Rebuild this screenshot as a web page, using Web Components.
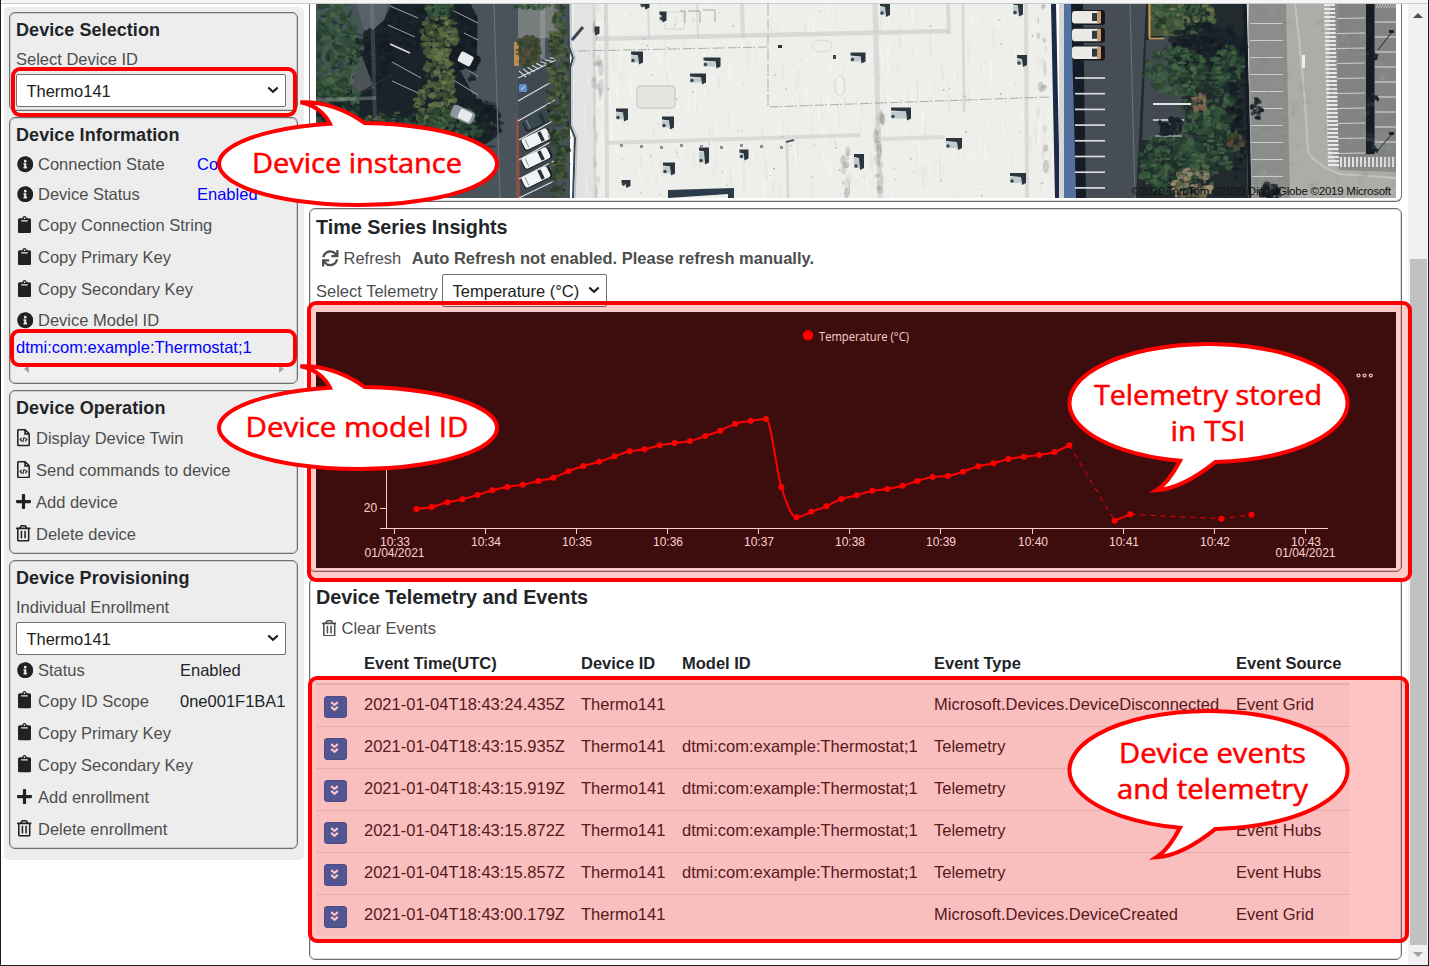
<!DOCTYPE html>
<html lang="en">
<head>
<meta charset="utf-8">
<title>Device dashboard</title>
<style>
html,body{margin:0;height:100%;overflow:hidden;background:#fff}
body{font-family:"Liberation Sans",Arial,sans-serif;font-size:16.5px;color:#212529}
</style>
</head>
<body>
<dash-app></dash-app>
<script>
const ICONS={
info:['0 0 512 512','<path d="M256 8C119.043 8 8 119.083 8 256c0 136.997 111.043 248 248 248s248-111.003 248-248C504 119.083 392.957 8 256 8zm0 110c23.196 0 42 18.804 42 42s-18.804 42-42 42-42-18.804-42-42 18.804-42 42-42zm56 254c0 6.627-5.373 12-12 12h-88c-6.627 0-12-5.373-12-12v-24c0-6.627 5.373-12 12-12h12v-64h-12c-6.627 0-12-5.373-12-12v-24c0-6.627 5.373-12 12-12h64c6.627 0 12 5.373 12 12v100h12c6.627 0 12 5.373 12 12v24z"/>',16.5],
clip:['0 0 384 512','<path d="M384 112v352c0 26.51-21.49 48-48 48H48c-26.51 0-48-21.49-48-48V112c0-26.51 21.49-48 48-48h80c0-35.29 28.71-64 64-64s64 28.71 64 64h80c26.51 0 48 21.49 48 48zM192 40c-13.255 0-24 10.745-24 24s10.745 24 24 24 24-10.745 24-24-10.745-24-24-24m96 114v-20a6 6 0 0 0-6-6H102a6 6 0 0 0-6 6v20a6 6 0 0 0 6 6h180a6 6 0 0 0 6-6z"/>',13],
plus:['0 0 448 512','<path d="M416 208H272V64c0-17.67-14.33-32-32-32h-32c-17.67 0-32 14.33-32 32v144H32c-17.67 0-32 14.33-32 32v32c0 17.67 14.33 32 32 32h144v144c0 17.67 14.33 32 32 32h32c17.67 0 32-14.33 32-32V304h144c17.67 0 32-14.33 32-32v-32c0-17.67-14.33-32-32-32z"/>',15],
trash:['0 0 448 512','<path d="M268 416h24a12 12 0 0 0 12-12V188a12 12 0 0 0-12-12h-24a12 12 0 0 0-12 12v216a12 12 0 0 0 12 12zM432 80h-82.41l-34-56.7A48 48 0 0 0 274.41 0H173.59a48 48 0 0 0-41.16 23.3L98.41 80H16A16 16 0 0 0 0 96v16a16 16 0 0 0 16 16h16v336a48 48 0 0 0 48 48h288a48 48 0 0 0 48-48V128h16a16 16 0 0 0 16-16V96a16 16 0 0 0-16-16zM171.84 50.91A6 6 0 0 1 177 48h94a6 6 0 0 1 5.15 2.91L293.61 80H154.39zM368 464H80V128h288zm-212-48h24a12 12 0 0 0 12-12V188a12 12 0 0 0-12-12h-24a12 12 0 0 0-12 12v216a12 12 0 0 0 12 12z"/>',14.5],
code:['0 0 384 512','<g fill="none" stroke="currentColor" stroke-width="46"><path d="M48 24H240L360 144V464a24 24 0 0 1-24 24H48a24 24 0 0 1-24-24V48a24 24 0 0 1 24-24zM236 32V148H352"/><path stroke-width="34" d="M142 262L94 312L142 362M242 262L290 312L242 364M214 236L170 390"/></g>',13],
sync:['0 0 512 512','<path d="M440.65 12.57l4 82.77A247.16 247.16 0 0 0 255.83 8C134.73 8 33.91 94.92 12.29 209.82A12 12 0 0 0 24.09 224h49.05a12 12 0 0 0 11.67-9.26 175.91 175.91 0 0 1 317-56.94l-101.46-4.86a12 12 0 0 0-12.57 12v47.41a12 12 0 0 0 12 12H500a12 12 0 0 0 12-12V12a12 12 0 0 0-12-12h-47.37a12 12 0 0 0-11.98 12.57zM255.83 432a175.61 175.61 0 0 1-146-77.8l101.8 4.87a12 12 0 0 0 12.57-12v-47.4a12 12 0 0 0-12-12H12a12 12 0 0 0-12 12V500a12 12 0 0 0 12 12h47.35a12 12 0 0 0 12-12.6l-4.15-82.57A247.17 247.17 0 0 0 255.83 504c121.11 0 221.93-86.92 243.55-201.82a12 12 0 0 0-11.8-14.18h-49.05a12 12 0 0 0-11.67 9.26A175.86 175.86 0 0 1 255.83 432z"/>',16.5],
down2:['0 0 10 12','<path fill="none" stroke="currentColor" stroke-width="2.4" d="M1.3 1.3L5 4.4L8.7 1.3M1.3 6.6L5 9.7L8.700 6.6"/>',9]
};
class Base extends HTMLElement{
  connectedCallback(){
    if(!this.shadowRoot){this.attachShadow({mode:'open'}).innerHTML=this.view();this.ready&&this.ready()}
  }
}
const def=(n,c)=>customElements.define(n,c);

def('ui-icon',class extends Base{view(){
  const [vb,body,w]=ICONS[this.getAttribute('name')];
  const [,,a,b]=vb.split(' ');
  return `<style>:host{display:inline-flex;flex:none}svg{display:block;fill:currentColor}</style><svg viewBox="${vb}" width="${w}" height="${(w*b/a).toFixed(2)}">${body}</svg>`}});

// Inline label whose tracking adapts so that it spans exactly w pixels.
def('fit-text',class extends Base{
  view(){return `<style>:host{display:inline-block;white-space:pre;flex:none}</style><slot></slot>`}
  ready(){queueMicrotask(()=>{
    const w=+this.getAttribute('w'),n=this.textContent.length,r=this.getBoundingClientRect().width;
    if(w&&r)this.style.letterSpacing=((w-r)/n).toFixed(3)+'px';
  })}
});

def('ui-panel',class extends Base{view(){
  const big=this.hasAttribute('big');
  return `<style>
  :host{display:block;box-sizing:border-box;border:1px solid #6f6f6f;border-radius:6px;padding:0 6px;box-shadow:inset 0 0 0 1px rgba(120,120,120,.28);flex:none}
  h2{margin:0;font-size:${big?19.8:18}px;font-weight:bold;line-height:${big?36:35}px;height:${big?36:33}px;white-space:nowrap}
  </style><h2><fit-text w="${this.getAttribute('w')}">${this.getAttribute('heading')}</fit-text></h2><slot></slot>`}});

def('ui-row',class extends Base{view(){
  const ic=this.getAttribute('icon'),v=this.getAttribute('value');
  return `<style>
  :host{display:grid;align-items:center;white-space:nowrap;color:#4e4e4e;height:var(--h,32px);
    grid-template-columns:${ic?'var(--ic,22px) ':''}${v?'var(--val,159px) ':''}1fr}
  .i{display:flex;color:#212121;padding-left:var(--ip,.5px)}
  .i.clip{padding:0 0 2px 1.500px}
  .i.trash,.i.code{padding-bottom:1px}
  .v{color:var(--vc,#212529)}
  </style>${ic?`<span class="i ${ic}"><ui-icon name="${ic}"></ui-icon></span>`:''}<span><slot></slot></span>${v?`<span class="v">${v}</span>`:''}`}});

def('ui-select',class extends Base{view(){return `<style>
  :host{display:flex;box-sizing:border-box;align-items:center;justify-content:space-between;width:270px;height:33px;border:1px solid #6f6f6f;border-radius:2px;background:#fff;padding:1px 6px 0 9.400px;white-space:nowrap;color:#212121;font-size:16.5px}
  svg{display:block;margin-bottom:2px}
  </style><span><slot></slot></span><svg width="12" height="8" viewBox="0 0 12 8"><path d="M1.3 1.5L6 5.8L10.7 1.5" fill="none" stroke="#1a1a1a" stroke-width="2.1"/></svg>`}});

def('ui-sidebar',class extends Base{view(){return `<style>
  :host{display:flex;flex-direction:column;gap:6px;box-sizing:border-box;width:300px;height:853px;padding:5px;background:#ededed;border-radius:5px;flex:none}
  ui-panel{width:289px}
  .hs{display:flex;justify-content:space-between;align-items:center;height:20px;width:276px;padding:0 8px;box-sizing:border-box;background:#f0f0f0}
  .hs i{border:4px solid transparent}
  .hs i:first-child{border-right:5px solid #a3a3a3;border-left:0}
  .hs i:last-child{border-left:5px solid #a3a3a3;border-right:0}
  .link{color:#00f}
  </style>
  <ui-panel heading="Device Selection" w="144" style="height:99px">
    <ui-row style="--h:26px;margin-bottom:2px">Select Device ID</ui-row>
    <ui-select>Thermo141</ui-select>
  </ui-panel>
  <ui-panel heading="Device Information" w="163.5" style="height:267px;--vc:#00f">
    <ui-row icon="info" value="Co" style="--h:27px">Connection State</ui-row>
    <ui-row icon="info" value="Enabled" style="--h:32px">Device Status</ui-row>
    <ui-row icon="clip" style="--h:31px">Copy Connection String</ui-row>
    <ui-row icon="clip" style="--h:33px">Copy Primary Key</ui-row>
    <ui-row icon="clip" style="--h:31px">Copy Secondary Key</ui-row>
    <ui-row icon="info" style="--h:31px">Device Model ID</ui-row>
    <ui-row style="--h:23px"><span class="link">dtmi:com:example:Thermostat;1</span></ui-row>
    <div class="hs"><i></i><i></i></div>
  </ui-panel>
  <ui-panel heading="Device Operation" w="149.5" style="height:164px;--ic:20px">
    <ui-row icon="code" style="--h:29px;--ip:1px">Display Device Twin</ui-row>
    <ui-row icon="code" style="--h:34px;--ip:1px">Send commands to device</ui-row>
    <ui-row icon="plus" style="--h:30px;--ip:0px">Add device</ui-row>
    <ui-row icon="trash" style="--h:34px;--ip:0px">Delete device</ui-row>
  </ui-panel>
  <ui-panel heading="Device Provisioning" w="173.5" style="height:289px;--val:142px">
    <ui-row style="--h:28px;margin-top:-1px;margin-bottom:1px">Individual Enrollment</ui-row>
    <ui-select>Thermo141</ui-select>
    <ui-row icon="info" value="Enabled" style="--h:30px">Status</ui-row>
    <ui-row icon="clip" value="0ne001F1BA1" style="--h:32px">Copy ID Scope</ui-row>
    <ui-row icon="clip">Copy Primary Key</ui-row>
    <ui-row icon="clip">Copy Secondary Key</ui-row>
    <ui-row icon="plus" style="--ip:1px">Add enrollment</ui-row>
    <ui-row icon="trash" style="--ip:1px">Delete enrollment</ui-row>
  </ui-panel>`}});

// Aerial view: vegetation, stalls, cars, roof equipment.
def('map-view',class extends Base{view(){
  let s=11;const R=()=>(s=(s*16807)%2147483647)/2147483647;
  let o='';
  const rect=(x,y,w,h,f,e='')=>o+=`<rect x="${x}" y="${y}" width="${w}" height="${h}" fill="${f}" ${e}/>`;
  const line=(a,b,c,d,k='#d4d8da',w=1,e='')=>o+=`<path d="M${a} ${b}L${c} ${d}" stroke="${k}" stroke-width="${w}" ${e}/>`;
  const poly=(p,f,e='')=>o+=`<polygon points="${p}" fill="${f}" ${e}/>`;
  const leaf=(x,y,w,h,n,cols,m=4)=>{for(let i=0;i<n;i++){const a=R()*6.283,r=Math.sqrt(R());
    o+=`<ellipse cx="${(x+w/2+Math.cos(a)*r*w/2).toFixed(1)}" cy="${(y+h/2+Math.sin(a)*r*h/2).toFixed(1)}" rx="${(1+R()*m).toFixed(1)}" ry="${(1+R()*m*.7).toFixed(1)}" fill="${cols[R()*cols.length|0]}" opacity="${(.45+R()*.5).toFixed(2)}"/>`}};
  const G=['#32523a','#3c5f42','#27412f','#486a46','#1f352a','#2f4c35'],O=['#5d6e44','#52643f','#6d7a50','#435437','#33422c'],K=['#161d26','#1a222b','#121920','#1b2629'];
  // left lot
  rect(316,4,254,194,'#48525a');
  poly('366,28 384,20 392,2 470,2 478,20 476,60 460,70 476,100 498,110 492,140 460,160 360,150 316,120 316,84 350,84','#1a222a');
  poly('356,4 388,4 384,20 366,36','#59616a');poly('352,40 366,46 350,92','#5d6265');
  leaf(352,30,40,60,120,K,5);leaf(385,0,95,50,150,K,5);leaf(440,16,40,70,90,K,5);leaf(455,90,40,80,90,K,5);
  poly('478,4 500,4 500,104 476,98','#48525a');poly('352,62 362,56 374,88 352,94','#5a6064','opacity=".8"');
  line(352,98,396,72,'#222c30',2);
  leaf(306,-6,52,108,420,G,3.5);leaf(306,78,54,50,150,G,3.5);leaf(355,112,60,20,60,O.concat(G),3);
  [[390,6,418,18],[388,25,415,37],[392,62,421,78],[392,81,418,93],[452,10,478,23],[464,33,478,40],[455,60,478,77],[450,78,478,95]].forEach(a=>line(...a,'#a9b3b8',.9));
  line(390,44,410,53,'#d8d8d8',1.8);
  leaf(420,14,38,48,200,O,3);leaf(426,50,30,42,130,O,3);leaf(416,80,42,50,160,O,3);leaf(425,0,30,18,60,G,3);leaf(402,108,90,34,230,G,3);leaf(478,104,22,34,60,K,4);
  const car=(x,y,a,w,h,c)=>{o+=`<g transform="translate(${x} ${y}) rotate(${a})"><rect x="${-w/2-1}" y="${-h/2+1}" width="${w+3}" height="${h}" rx="3" fill="#161c22"/><rect x="${-w/2}" y="${-h/2}" width="${w}" height="${h}" rx="2.8" fill="${c}"/><path d="M${w*.2} ${-h/2+1}v${h-2}" stroke="#27313a" stroke-width="3.6"/><path d="M${-w*.36} ${-h/2+1.5}v${h-3}" stroke="#8a959c" stroke-width=".9"/></g>`};
  o+='<g transform="translate(465 58) rotate(28)"><rect x="-15" y="-8" width="30" height="17" rx="4" fill="#131a21"/><rect x="-6" y="-5" width="14" height="11" rx="2" fill="#e8ecee"/></g><g transform="translate(463 114) rotate(25)"><rect x="-12" y="-6" width="24" height="13" rx="4" fill="#8b979f"/><rect x="-4" y="-4.500" width="13" height="10" rx="2" fill="#e6eaed"/></g>';
  line(494,4,500,198,'#66727a',1.2);
  line(372,4,375,120,'#8a9298',4,'opacity=".28"');line(316,100,376,98,'#a0a6a8',3.5,'opacity=".4"');
  // centre stalls
  rect(518,4,40,34,'#777c7b');rect(540,4,5,55,'#a4a8a6','opacity=".5"');leaf(514,0,36,10,40,G,2);
  rect(514,42,5,24,'#b98d4e');leaf(518,36,22,32,110,['#3e4a30','#59503a','#2f3d28'],3);
  rect(516,118,4,80,'#8c5048');
  poly('518,72 556,54 555,198 520,198','#3f4850');
  [[518,78,556,60],[518,101,555,80],[518,121,555,100],[519,140,554,120],[519,160,554,140],[519,179,554,161],[519,198,554,181]].forEach(a=>line(...a,'#dde2e4',1.2));
  for(let i=0;i<8;i++)line(519+i*4.3,71-i*1.9,526+i*4.3,77-i*2.6,'#d0d5d6',1.2);
  rect(519,84,8,8,'#5d8fca','rx="1.5"');line(521,90,525,86,'#dbe8f5',1);
  car(537,120,-26,27,12,'#37464f');car(536,139,-26,28,12,'#f1f3f4');car(536,158,-26,28,12,'#f1f3f4');car(536,177,-26,28,12,'#f1f3f4');
  leaf(548,2,22,200,420,['#35492f','#42563a','#2f4230','#56663f','#26331f'],3);
  // roof
  poly('569,4 1052,4 1056,198 573,198','#eeeeeb');
  rect(574,4,22,194,'#e3e4e2');
  o+='<path d="M568.500 4V45L573 58L570 68V125L575 138L573 198" fill="none" stroke="#3b4650" stroke-width="2"/><path d="M571 4V45L575 58L572 68V125L577 138L575 198" fill="none" stroke="#b8c2cc" stroke-width="1.6"/>';
  line(572,40,583,27,'#3b4450',3);
  for(let i=0;i<360;i++){const x=582+R()*468,y=4+R()*194;line(x.toFixed(1),y.toFixed(1),(x+R()*1.5).toFixed(1),(y+R()*26).toFixed(1),R()<.5?'#e2e2df':'#f7f7f5',(.6+R()*2).toFixed(1),'opacity=".55"')}
  line(594,39,950,31,'#d8d8d6',4.5);line(606,143,860,135,'#dadad8',4);line(880,139,945,137,'#dcdcda',4);
  [[594,3],[606,4],[648,2],[697,2],[742,4],[875,5],[948,4],[963,3],[1026,4],[787,3]].forEach(([x,w],i)=>line(x,i==9?140:i==4?4:4,x+(i==5?5:1),i==2?38:i==3?38:i==4?38:i==6?34:i==7?112:198,'#d2d3d1',w,'opacity=".75"'));
  o+='<path d="M768 4V107L1050 97M578 51L768 47" fill="none" stroke="#a4a5a4" stroke-width=".9" stroke-dasharray="9 1 2 3"/>';
  for(let i=0;i<80;i++){const v=[[597,4,190],[847,150,45],[1042,4,190],[879,110,80]][R()*4|0];o+=`<ellipse cx="${(v[0]+R()*8-4).toFixed(1)}" cy="${(v[1]+R()*v[2]).toFixed(1)}" rx="${(.6+R()*2.6).toFixed(1)}" ry="${(1+R()*7).toFixed(1)}" fill="#8c8d8b" opacity="${(.1+R()*.3).toFixed(2)}"/>`}
  for(let i=0;i<90;i++)o+=`<circle cx="${(600+R()*440).toFixed(1)}" cy="${(6+R()*190).toFixed(1)}" r="${(.3+R()*.7).toFixed(1)}" fill="#85868a" opacity=".5"/>`;
  o+='<g fill="none" stroke="#d0d1cc" opacity=".8"><rect x="637" y="86" width="38" height="22" rx="4" stroke-width="2" fill="#e5e5df"/><rect x="665" y="12" width="19" height="17"/><path d="M680 11h5v12M688 11h12v12M703 10h12v12" stroke="#8f9296"/><ellipse cx="822" cy="46" rx="10" ry="6"/><ellipse cx="840" cy="86" rx="5" ry="10"/></g>';
  const unit=(x,y,w=12,h=11)=>{poly(`${x-w/2},${y-h/2} ${x+w/2},${y-h/2} ${x+w/2},${y+h/2} ${x+w/2-4},${y+h/2+2} ${x+w/2-5},${y-h/2+4} ${x-w/2},${y-h/2+3}`,'#2b343e');rect(x-w/2,y-h/2+4,w-5,h-4,'#bfc9d0');o+=`<circle cx="${x-w/2+2}" cy="${y+h/2-2}" r="1.700" fill="#3a4148"/>`};
  [[637,57],[622,114],[668,122],[669,168],[712,62,17,9],[698,78,16,9],[704,155,10,15],[744,154,9,9],[858,57,15,9],[901,113,20,11],[954,143,16,10],[859,161,10,14],[885,9,10,12],[1018,8,10,13],[1022,60,10,10],[1018,178,16,10],[663,16,7,9],[645,5,9,5],[626,183,9,6],[597,30,5,7]].forEach(a=>unit(...a));
  rect(778,45,4,3,'#333');rect(833,55,3,4,'#444');
  for(let i=0;i<9;i++)rect(620+i*20,144+(i%3),3,3,'#8d8f92');
  poly('668,190 734,188 734,198 728,198 728,194 668,198','#2c3a48');
  line(786,142,794,140,'#555',2);
  // wall and right lots
  poly('1051,4 1056,4 1060,198 1055,198','#1d2a44');rect(1059,4,5,194,'#d4d5d6');
  poly('1064,4 1072,4 1076,198 1064,198','#52719f');
  poly('1072,4 1150,4 1142,198 1076,198','#474d55');poly('1071,4 1083,4 1086,198 1076,198','#171d26');
  for(let i=0;i<3;i++){rect(1073,10+i*17.8,32,15,'#14181d','rx="3"');rect(1072,11+i*17.8,29,12.500,'#eceae6','rx="3"');rect(1092,13+i*17.8,5,8,'#303940');rect(1097,11+i*17.8,4,12.500,'#c79d70','rx="1"')}
  for(let i=0;i<8;i++)line(1075,78+i*15.7,1105,78+i*15.7,'#d9dde0',1.7);
  line(1130,4,1135,198,'#687077',1.2);
  poly('1146,4 1246,4 1248,198 1136,198','#20292f');poly('1146,40 1170,36 1190,140 1142,140','#434951');
  rect(1148,4,36,32,'#45523a');
  leaf(1152,-4,62,42,220,O.concat(G),3);
  line(1149.500,4,1149.500,38,'#c49a50',2);line(1149,38.500,1164,38.500,'#c49a50',1.6);
  leaf(1168,24,76,44,140,K,5);leaf(1144,46,62,48,280,G,3);leaf(1212,46,32,40,120,G,3);leaf(1180,70,60,70,190,G,3);leaf(1180,110,64,64,260,G,3.5);leaf(1138,134,62,60,320,G,3.5);leaf(1228,60,20,120,60,K,4);
  leaf(1192,94,14,20,40,['#74624e','#8a7059'],2);leaf(1226,135,18,14,30,['#5a4a3a','#3a3628'],2.5);leaf(1172,168,42,34,130,['#8d8064','#a0917a','#55603f','#6f5f48'],2.500);
  line(1153,104,1191,104,'#e4e6e8',2);line(1153,120,1184,120,'#d6dadd',1.6);line(1155,136,1182,136,'#aab1b6',1.3);leaf(1158,118,24,18,40,K,3.5);
  rect(1249,4,147,194,'#8b8d8b');
  poly('1286,4 1330,4 1328,145 1340,170 1396,172 1396,198 1290,198','#acada8');
  for(let i=0;i<11;i++)line(1250,23.500+i*17,1283,23.500+i*17,'#ccccca',1.1);
  line(1245,4,1250,198,'#171e28',3.5);line(1248,4,1252,198,'#a0a6ab',1);
  leaf(1251,96,11,24,26,K,2);leaf(1260,184,20,18,40,K,3);
  o+='<path d="M1295 4C1302 60 1306 110 1308 152Q1316 165 1340 174L1396 178" fill="none" stroke="#c2c2be" stroke-width="2"/>';
  rect(1302,55,3,13,'#eee');
  rect(1338,4,58,152,'#828482');
  for(let i=0;i<41;i++)line(1324+i*.1,5+i*4,1335+i*.1,5+i*4,'#e9e9e7',2.2);
  for(let i=0;i<10;i++)line(1337,18.500+i*15,1365,18+i*15,'#d0d1cf',1.2);
  for(let i=0;i<9;i++)line(1375,22+i*15,1396,22+i*15,'#d0d1cf',1.2);
  for(let i=0;i<15;i++)line(1341+i*4,157,1341+i*4,167,'#e6e6e4',1.9);
  for(let i=0;i<8;i++)line(1376+i*2.6,8,1378+i*2.6,4,'#d0d1cf',.8);
  rect(1366,4,8.500,150,'#151c22');
  [[55],[98],[150]].forEach(([y])=>leaf(1368,y-4,10,9,16,K,2));line(1378,50,1392,32,'#222',1);line(1378,150,1392,134,'#222',1);
  rect(1389,30,5,3,'#222');rect(1389,132,5,3,'#222');
  for(let i=0;i<150;i++)o+=`<rect x="${(1251+R()*140).toFixed(1)}" y="${(4+R()*186).toFixed(1)}" width="${(1+R()*10).toFixed(1)}" height="${(1+R()*8).toFixed(1)}" fill="${R()<.5?'#6f716f':'#b5b6b1'}" opacity=".1"/>`;
  return `<style>:host{display:block;height:194px;width:1080px}svg{display:block}text{font:11.500px "Liberation Sans",Arial,sans-serif;fill:#111}</style>
  <svg width="1080" height="194" viewBox="316 4 1080 194"><defs><filter id="b"><feGaussianBlur stdDeviation=".75"/></filter></defs><g filter="url(#b)">${o}</g><text x="1131.500" y="194.500" textLength="259.500">©2020 TomTom ©2020 DigitalGlobe ©2019 Microsoft</text></svg>`}});

def('tsi-chart',class extends Base{view(){
  const A=[[309,327],[352,321],[396,307],[438,298],[480,285],[522,271],[564,261],[607,254],[651,243],[693,233],[735,214],[776,198],[821,185],[864,169],[906,154],[948,148],[990,136],[1032,129],[1075,123],[1118,108],[1160,92],[1202,71],[1245,63],[1288,57],[1331,262],[1373,352],[1415,335],[1457,319],[1499,297],[1542,286]].map(([x,y])=>[306+x/2.8,400+y/3]);
  const B=[[34,482],[75,477],[117,467],[158,453],[200,441],[242,438],[284,425],[326,409],[368,400],[409,387],[452,380],[494,375],[536,366],[577,346],[702,572],[745,553],[996,566],[1079,554]].map(([x,y])=>[860+x/2.756,330+y/3]);
  const P=A.concat(B),L=P.slice(0,44);
  // monotone cubic interpolation
  const m=L.map((p,i)=>{if(!i||i==L.length-1)return 0;const s0=(p[1]-L[i-1][1])/(p[0]-L[i-1][0]),s1=(L[i+1][1]-p[1])/(L[i+1][0]-p[0]);return s0*s1<=0?0:(Math.sign(s0)*Math.min(Math.abs(s0),Math.abs(s1),Math.abs(s0+s1)/4)*2)});
  m[0]=-.1;m[43]=-.5;
  let d=`M${L[0]}`;for(let i=1;i<L.length;i++){const a=L[i-1],b=L[i],h=(b[0]-a[0])/3;d+=`C${(a[0]+h).toFixed(1)} ${(a[1]+m[i-1]*h).toFixed(1)} ${(b[0]-h).toFixed(1)} ${(b[1]-m[i]*h).toFixed(1)} ${b[0].toFixed(1)} ${b[1].toFixed(1)}`}
  const T=[394.5,485.5,576.5,667.5,758.5,849.5,940.5,1032.5,1123.5,1214.5,1305.5];
  return `<style>:host{display:block;height:256px;width:1080px;background:#0d0f0f}svg{display:block}text{font:12px "Liberation Sans",Arial,sans-serif;fill:#fff;text-anchor:middle}.lg{font-family:"Open Sans",sans-serif;text-anchor:start}</style>
  <svg width="1080" height="256" viewBox="316 312 1080 256">
  <circle cx="808" cy="335.300" r="5.200" fill="red"/><text class="lg" x="819" y="341" textLength="90" lengthAdjust="spacingAndGlyphs">Temperature (°C)</text>
  <g fill="none" stroke="#fff"><path d="M386.500 420V528M380 508.500H386M380 528.500H1328${T.map(x=>`M${x} 528V534`).join('')}"/><g stroke-width="1.200"><circle cx="1358.500" cy="375.500" r="1.500"/><circle cx="1364.500" cy="375.500" r="1.500"/><circle cx="1370.800" cy="375.500" r="1.500"/></g></g>
  <text x="370.500" y="512">20</text>
  ${T.map((x,i)=>`<text x="${x+.5}" y="546">10:${33+i}</text>`).join('')}
  <text x="394.500" y="557">01/04/2021</text><text x="1305.500" y="557">01/04/2021</text>
  <g fill="none" stroke="red"><path d="${d}" stroke-width="2"/><path d="M${P[44]}L${P[45]}" stroke-width="2"/><path d="M${P[43]}L${P[44]}M${P[45]}L${P[46]}L${P[47]}" stroke-dasharray="5 5"/></g>
  <g fill="red">${P.map(p=>`<circle cx="${p[0].toFixed(1)}" cy="${p[1].toFixed(1)}" r="3"/>`).join('')}</g>
  </svg>`}});

def('events-table',class extends Base{view(){
  const M='dtmi:com:example:Thermostat;1',D='Thermo141';
  const rows=[['24.435','','Microsoft.Devices.DeviceDisconnected','Event Grid'],['15.935',M,'Telemetry',''],['15.919',M,'Telemetry',''],['15.872',M,'Telemetry','Event Hubs'],['15.857',M,'Telemetry','Event Hubs'],['00.179','','Microsoft.Devices.DeviceCreated','Event Grid']];
  return `<style>
  :host{display:block;width:1034px}
  .r{display:grid;grid-template-columns:48px 217px 101px 252px 302px 1fr;align-items:center;height:42px;box-sizing:border-box;background:#f8f8f8;white-space:nowrap}
  .r+.r{border-top:1px solid #dee2e6;padding-bottom:3px}
  .h{height:43px;background:none;font-weight:bold;border-bottom:2px solid #dee2e6;padding:2px 0 0}
  .h+.r{border-top:0;padding-bottom:2px;height:41px}
  b{display:flex;align-items:center;justify-content:center;box-sizing:border-box;width:23px;height:22px;margin:6px 0 0 8px;padding:0 3px 1px 0;border-radius:3px;background:#1d71c0;color:#fff;border:1px solid #1a63ab}
  .h+.r b{margin-top:4px}
  </style><div class="r h"><span></span><span>Event Time(UTC)</span><span>Device ID</span><span>Model ID</span><span>Event Type</span><span>Event Source</span></div>
  ${rows.map(r=>`<div class="r"><b><ui-icon name="down2"></ui-icon></b><span>2021-01-04T18:43:${r[0]}Z</span><span>${D}</span><span>${r[1]}</span><span>${r[2]}</span><span>${r[3]}</span></div>`).join('')}`}});

def('ui-scrollbar',class extends Base{view(){return `<style>
  :host{display:flex;flex-direction:column;align-items:center;width:20px;height:961px;background:#f1f1f1;flex:none}
  i{border:5px solid transparent;border-top:0;border-bottom:5px solid #505050;margin-top:9px}
  div{width:17px;height:686px;background:#c1c1c1;margin:241px 0 0 2px;align-self:flex-start}
  i.d{border-bottom:0;border-top:5px solid #a3a3a3;margin-top:7px}
  </style><i></i><div></div><i class="d"></i>`}});

def('call-out',class extends Base{view(){
  const t=this.getAttribute('text').split('|'),w=this.getAttribute('w').split(','),up=t.length==1;
  // the tail is part of the same outline as the ellipse
  const shape=up
   ?`M131 21.800C127 13 117 3 101.500 .3C124 -1 148 8 165.500 21A139 41 0 1 1 131 21.800Z`
   :`M130 118.750C122 134 115 143 106.500 148.300C127 147 148 134 165.500 119.930A139 59 0 1 0 130 118.750Z`;
  const y0=+(this.getAttribute('y')||0);
  return `<style>:host{position:absolute;display:block}svg{display:block;overflow:visible}text{font:500 28px "Open Sans","Noto Sans",sans-serif;fill:red;stroke:red;stroke-width:.55px;text-anchor:middle}</style>
  <svg width="300" height="${up?106:152}" viewBox="0 0 300 ${up?106:152}"><path d="${shape}" fill="#fff" stroke="red" stroke-width="4" stroke-miterlimit="5"/>
  ${t.map((x,i)=>`<text x="${158+ +(this.getAttribute('dx')||0)}" y="${y0+36.300*i}" textLength="${w[i]}" lengthAdjust="spacingAndGlyphs">${x}</text>`).join('')}</svg>`}});

def('mark-box',class extends Base{view(){return `<style>:host{position:absolute;box-sizing:border-box;border:4px solid red;border-radius:9px}</style>`}});

def('dash-app',class extends Base{view(){return `<style>
  :host{display:flex;flex-direction:column;position:relative;box-sizing:border-box;width:1429px;height:966px;overflow:hidden;border:solid #1e1e1e;border-width:0 1px 1px;background:#fff}
  header{height:3px;background:#f5f5f5;border-bottom:1px solid #ccc;flex:none}
  .body{display:flex;height:961px}
  ui-sidebar{margin:3px 0 0 3px}
  main{display:flex;flex-direction:column;gap:6px;width:1093px;margin:0 6px 0 5px;height:961px}
  .map{box-sizing:border-box;height:198px;border:1px solid #6f6f6f;border-top:0;border-radius:0 0 6px 6px;padding:0 6px;flex:none;box-shadow:inset 0 -1px 0 rgba(120,120,120,.28)}
  .line{display:flex;align-items:center;color:#4e4e4e;height:27px;white-space:nowrap}
  .line ui-icon{margin:0 5px 0 6px}
  .line.clr ui-icon{margin:0 5.500px 1px 5.500px}
  .tel{height:33px;margin:2px 0 5px}
  .tel ui-select{width:165px;margin-left:4.500px}
  .tel>span{padding-top:1px}
  </style>
  <header></header>
  <div class="body">
    <ui-sidebar></ui-sidebar>
    <main>
      <div class="map"><map-view></map-view></div>
      <ui-panel big heading="Time Series Insights" w="191.500" style="height:364px">
        <div class="line"><ui-icon name="sync"></ui-icon><span>Refresh</span><strong style="margin-left:10.500px">Auto Refresh not enabled. Please refresh manually.</strong></div>
        <div class="line tel"><span>Select Telemetry</span><ui-select>Temperature (°C)</ui-select></div>
        <tsi-chart></tsi-chart>
      </ui-panel>
      <ui-panel big heading="Device Telemetry and Events" w="272" style="height:382px">
        <div class="line clr"><ui-icon name="trash"></ui-icon><span>Clear Events</span></div>
        <events-table></events-table>
      </ui-panel>
    </main>
    <ui-scrollbar></ui-scrollbar>
  </div>
  <mark-box style="left:10px;top:67px;width:286px;height:50px"></mark-box>
  <mark-box style="left:9px;top:329px;width:287px;height:38px"></mark-box>
  <mark-box style="left:306px;top:301px;width:1105px;height:281px;background:rgba(255,0,0,.2)"></mark-box>
  <mark-box style="left:307px;top:676px;width:1101px;height:267px;background:rgba(255,0,0,.23)"></mark-box>
  <call-out style="left:198px;top:102px" text="Device instance" w="210" y="71"></call-out>
  <call-out style="left:198px;top:366px" text="Device model ID" w="223" y="71"></call-out>
  <call-out style="left:1049px;top:342px" text="Telemetry stored|in TSI" w="228,75" y="62.500"></call-out>
  <call-out style="left:1049px;top:709px" dx="4.500" text="Device events|and telemetry" w="187,191" y="53.500"></call-out>
  `}});
</script>
</body>
</html>
